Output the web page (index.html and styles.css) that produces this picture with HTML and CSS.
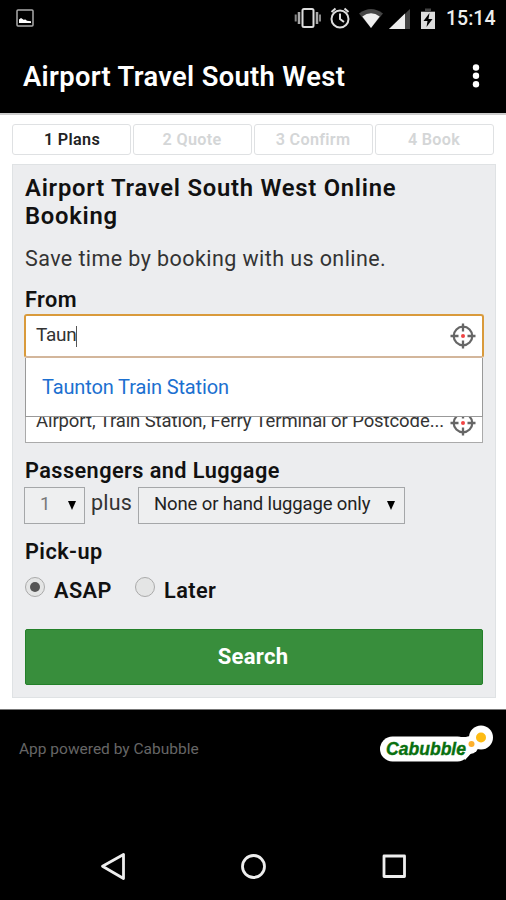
FILE: index.html
```html
<!DOCTYPE html>
<html lang="en">
<head>
<meta charset="utf-8">
<title>Airport Travel South West</title>
<link rel="stylesheet" href="styles.css">
</head>
<body>
<header class="status">
  <svg class="photo" width="18" height="18" viewBox="0 0 18 18"><rect x="1" y="1" width="16" height="16" rx="1" fill="none" stroke="#aaa" stroke-width="1.5"/><path d="M3 14V10.5L5 9l3 2 1-.7 2 1.5 4 .5V14z" fill="#fff"/></svg>
  <svg class="system" width="146" height="24" viewBox="0 0 146 24">
    <g fill="none" stroke="#ddd" stroke-width="2"><rect x="9.500" y="2" width="11" height="18" rx="1.500"/><path d="M6 5v12M24 5v12" stroke="#aaa" stroke-width="2.500"/><path d="M2.700 7.500v7M27 7.500v7" stroke="#888"/>
    <circle cx="47" cy="12" r="8.500"/><path d="M47 6.500V12l4 3M38.500 5l4-3.500M55.500 5l-4-3.500"/></g>
    <path d="M66 6.500Q78-2.500 90 6.500L78 21z" fill="#444"/><path d="M69.300 9.500Q78 3 86.700 9.500L78 21z" fill="#eee"/>
    <path d="M96 22L117 2V22z" fill="#444"/><path d="M96 22L112 6.500V22z" fill="#eee"/>
    <path d="M128 4h4V1.500h6V4h4v18h-14z" fill="#444"/><path d="M128 5h14v17h-14z" fill="#ddd"/><path d="M136.500 6l-6 8h4l-1 6 6-8h-4z" fill="#000"/>
  </svg>
  <span class="clock">15:14</span>
</header>
<div class="appbar">
  <h1>Airport Travel South West</h1>
  <svg width="8" height="24" viewBox="0 0 8 24" fill="#fff"><circle cx="4" cy="3.500" r="3.200"/><circle cx="4" cy="11.800" r="3.200"/><circle cx="4" cy="20.200" r="3.200"/></svg>
</div>
<main>
  <nav class="steps"><span class="current">1 Plans</span><span>2 Quote</span><span>3 Confirm</span><span>4 Book</span></nav>
  <section class="panel">
    <h2>Airport Travel South West Online Booking</h2>
    <p class="intro">Save time by booking with us online.</p>
    <h3 class="from-label">From</h3>
    <div class="from">
      <div class="field focus"><span class="typed">Taun</span><i class="caret"></i>
        <svg class="target" width="26" height="26" viewBox="0 0 26 26"><g fill="none" stroke="#666"><circle cx="13" cy="13" r="9.300" stroke-width="2.200"/><path d="M13 .5v8M13 17.500v8M.5 13h8M17.500 13h8" stroke-width="2.300"/></g><circle cx="13" cy="13" r="2" fill="#f04444"/></svg>
      </div>
      <div class="suggest">Taunton Train Station</div>
    </div>
    <div class="field to"><span class="hint">Airport, Train Station, Ferry Terminal or Postcode...</span>
      <svg class="target" width="26" height="26" viewBox="0 0 26 26"><g fill="none" stroke="#666"><circle cx="13" cy="13" r="9.300" stroke-width="2.200"/><path d="M13 .5v8M13 17.500v8M.5 13h8M17.500 13h8" stroke-width="2.300"/></g><circle cx="13" cy="13" r="2" fill="#f04444"/></svg>
    </div>
    <h3 class="pass-label">Passengers and Luggage</h3>
    <div class="selects">
      <div class="select count"><span>1</span><svg width="8" height="9" viewBox="0 0 8 9"><path d="M0 0h8L4 9z"/></svg></div>
      <span class="plus">plus</span>
      <div class="select bags"><span>None or hand luggage only</span><svg width="8" height="9" viewBox="0 0 8 9"><path d="M0 0h8L4 9z"/></svg></div>
    </div>
    <h3 class="pick-label">Pick-up</h3>
    <div class="radios">
      <i class="radio on"></i><span class="asap">ASAP</span><i class="radio"></i><span class="later">Later</span>
    </div>
    <div class="search">Search</div>
  </section>
</main>
<footer class="powered">
  <span>App powered by Cabubble</span>
  <svg width="114" height="38" viewBox="0 0 114 38"><g fill="#fff"><rect x="1" y="11.500" width="90" height="25" rx="12.500"/><circle cx="102" cy="12.500" r="12"/><circle cx="91" cy="20" r="9"/><path d="M75 12h12l10 11-11 12z"/></g><text x="7" y="30" class="logo-text" textLength="80" lengthAdjust="spacingAndGlyphs">Cabubble</text><circle cx="102" cy="12.500" r="5" fill="#fdbb13"/><circle cx="92.500" cy="19" r="3" fill="#fdb02d"/></svg>
</footer>
<nav class="system-nav">
  <svg width="506" height="30" viewBox="0 0 506 30" fill="none" stroke="#eee" stroke-width="2.800" stroke-linejoin="round"><path d="M123.500 3.500v24L102.500 15.200z"/><circle cx="253.500" cy="15.500" r="11"/><rect x="384" y="5" width="20.500" height="20.500"/></svg>
</nav>
</body>
</html>
```
FILE: styles.css
```css
* { box-sizing: border-box; }
body { margin: 0; width: 506px; height: 900px; overflow: hidden; background: #000; font-family: Roboto, "Liberation Sans", sans-serif; color: #111; }
h1, h2, h3, p { margin: 0; font-weight: 600; white-space: nowrap; }
svg { display: block; flex: none; }
.status { height: 38px; display: flex; padding: 0 10px 0 16px; color: #eee; }
.photo { margin-top: 9px; }
.system { margin: 7px 0 0 259px; }
.clock { margin-left: 7px; font-size: 19.500px; line-height: 38px; font-weight: 500; }
.appbar { height: 75px; display: flex; justify-content: space-between; padding: 26px 26px 0 23px; color: #fff; }
.appbar h1 { font-size: 27.300px; line-height: 27px; letter-spacing: .35px; }
main { height: 597px; padding: 11px 10px 0 12px; background: #fff; border-top: 2px solid #ccc; border-bottom: 1px solid #777; }
.steps { display: grid; grid-template-columns: repeat(4, 119px); gap: 2px; height: 30px; margin-top: -2px; }
.steps span { height: 31px; border: 1px solid #dfe1e3; border-radius: 3px; text-align: center; font-size: 16.200px; line-height: 29px; font-weight: 600; letter-spacing: .3px; color: #d4d6d7; padding-right: 1px; }
.steps .current { color: #222; padding: 0 0 0 1px; }
.panel { height: 534px; width: 484px; margin-top: 10px; border: 1px solid #dfe2e4; background: #ecedef; padding: 9px 12px 0; }
h2 { width: 430px; font-size: 23.800px; line-height: 28px; letter-spacing: .75px; }
.panel h2 { white-space: normal; }
.intro { margin-top: 17px; font-size: 21.500px; line-height: 24px; font-weight: 400; letter-spacing: .42px; color: #333; }
h3 { font-size: 21.700px; line-height: 25px; letter-spacing: .44px; }
.from-label { margin-top: 16px; }
.from { position: relative; width: 460px; margin: 2px 0 0 -1px; }
.field { height: 44px; display: flex; align-items: center; border: 1px solid #aaa; background: #fff; font-size: 19px; padding: 0 6px 0 11px; color: #333; }
.field.focus { border: 2px solid #d99a3b; border-bottom-color: #d3b69b; border-radius: 3px; padding: 0 6px 0 10px; }
.typed { padding-bottom: 3px; letter-spacing: -.3px; }
.caret { width: 1px; height: 21px; background: #555; }
.target { margin-left: auto; }
.suggest { position: absolute; z-index: 1; left: 1px; top: 44px; width: 458px; height: 59px; border: 1px solid #999; border-top: 0; background: #fff; padding-left: 16px; font-size: 20px; letter-spacing: -.13px; line-height: 59px; color: #1c70d0; }
.to { width: 458px; height: 43px; margin: 42px 0 0; padding-left: 10px; }
.hint { white-space: nowrap; font-size: 18.500px; letter-spacing: -.09px; padding-bottom: 1px; }
.to .target { position: relative; top: 1px; }
.pass-label { margin-top: 15px; }
.selects { height: 38px; display: flex; margin: 4px 0 0 -1px; }
.select { height: 37px; border: 1px solid #a5a7a9; display: flex; align-items: center; justify-content: space-between; padding: 0 9px 0 16px; font-size: 18.500px; letter-spacing: -.13px; background: #eeeff0; color: #222; }
.select span { padding-bottom: 4px; }
.count { width: 61px; padding: 0 8px 0 15px; }
.count span { color: #777; }
.bags { width: 267px; padding-left: 15px; }
.plus { width: 53px; padding-left: 6px; font-size: 21.500px; letter-spacing: .2px; line-height: 31px; color: #333; }
.pick-label { margin-top: 14px; }
.radios { display: flex; height: 30px; margin-top: 11px; font-size: 21.700px; line-height: 31px; font-weight: 600; letter-spacing: .44px; }
.radio { width: 20px; height: 20px; margin-top: 2px; border-radius: 50%; border: 1px solid #aaa; background: #e4e5e5; display: flex; align-items: center; justify-content: center; }
.radio.on::after { content: ""; width: 10px; height: 10px; border-radius: 50%; background: #555; }
.asap { width: 81px; margin-left: 9px; }
.later { margin-left: 9px; }
.search { width: 458px; height: 56px; margin-top: 24px; background: #388e3c; border: 1px solid #238029; border-radius: 2px; text-align: center; font-size: 22px; letter-spacing: .3px; line-height: 54px; font-weight: 700; color: #fff; padding-right: 2px; }
.powered { height: 75px; display: flex; padding: 15px 13px 0 19px; justify-content: space-between; color: #666; font-size: 15.500px; line-height: 49px; }
.logo-text { font: italic 700 18.500px "Liberation Sans", sans-serif; fill: #08700f; stroke: #08700f; stroke-width: .4px; }
.system-nav { margin-top: 66px; }
```
